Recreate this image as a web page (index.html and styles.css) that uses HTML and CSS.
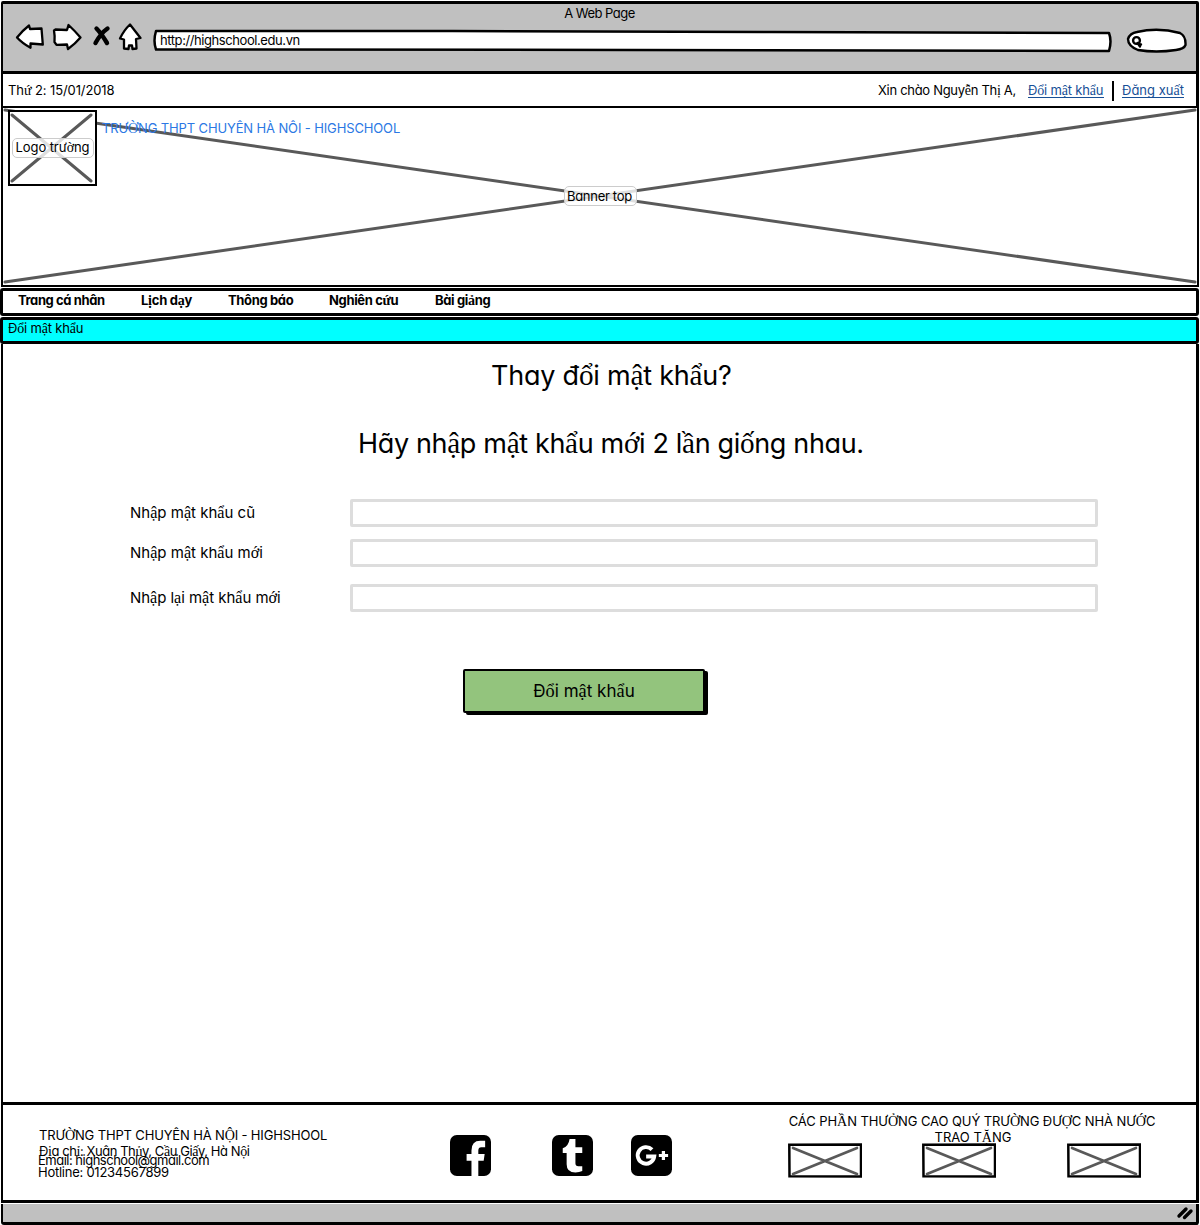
FILE: index.html
```html
<!DOCTYPE html>
<html lang="vi">
<head>
<meta charset="utf-8">
<title>A Web Page</title>
<link rel="stylesheet" href="styles.css">
</head>
<body>
<div class="window">
  <header class="chrome">
    <div class="chrome-title"><span class="t-title">A Web Page</span></div>
    <div class="toolbar">
      <svg class="nav-icons" width="132" height="32" viewBox="12 20 132 32" fill="#fff" stroke="#000" stroke-width="2.3" stroke-linejoin="round" stroke-linecap="round">
        <path d="M17 37.500 Q22 31 29 25.500 L30 29 L41.500 28.500 L42.800 44.500 L30.500 43.500 L30.500 47.800 Q22 43 17 37.500Z"/>
        <path d="M54 30.500 L55.500 29.500 L67 30 L68.500 25 Q75 31 80.500 37.500 Q75 44 68 49 L67 44.500 L56.500 44.800 L54.500 42Q55 36 54 30.500Z"/>
        <path d="M96.500 28.500 Q101 33 107 43 M107.500 28.500 Q101 33 95.500 43" stroke-width="4.400"/>
        <path d="M130 24.500 L140.500 38 L136 39 L136.500 48.500 L132.500 49 L132 45.500 L129 45.500 L128.500 49 L124 48.500 L124 39.500 L120 38.500Q124 30 130 24.500Z"/>
      </svg>
      <div class="address">
        <svg class="shape" width="960" height="24" viewBox="0 0 960 24" fill="#fff" stroke="#000" stroke-width="2.500" stroke-linejoin="round"><path d="M4 2 L300 2 L620 3 L957 4 Q960 12 957 22 L480 21 L4 20.500 Q1 12 4 2Z"/></svg>
        <span class="t-url">http://highschool.edu.vn</span>
      </div>
      <svg class="search" width="62" height="26" viewBox="0 0 62 26" fill="#fff" stroke="#000" stroke-width="2.400" stroke-linecap="round"><path d="M11 4 Q32 -1 54 5 Q60 8 59.500 17 Q58 21 50 22 Q30 25 12 22 Q2 18 2 11 Q4 5 11 4Z"/><circle cx="10.500" cy="12.500" r="3.400"/><path d="M11.500 15 L14 18.500M12 16L15 16.500"/></svg>
    </div>
  </header>

  <div class="userbar">
    <span class="t-date">Th<b>ứ</b> 2: 15/01/2018</span>
    <span class="greeting">Xin chào Nguy<b>ễ</b>n Th<b>ị</b> A,</span>
    <a class="link link-change" href="#">Đ<b>ổ</b>i m<b>ậ</b>t kh<b>ẩ</b>u</a>
    <i class="divider"></i>
    <a class="link link-out" href="#">Đăng xu<b>ấ</b>t</a>
  </div>

  <section class="banner">
    <svg class="shape" width="1196" height="178" viewBox="0 0 1196 178" stroke="#595959" stroke-width="3" stroke-linecap="round"><path d="M2 2 L1192 174 M2 174 L1192 2"/></svg>
    <div class="logo">
      <svg class="shape" width="84" height="72" viewBox="0 0 84 72" stroke="#595959" stroke-width="3" stroke-linecap="round"><path d="M2 3 L81 69 M81 3 L2 69"/></svg>
      <span class="tag tag-logo">Logo trư<b>ờ</b>ng</span>
    </div>
    <h1 class="school">TRƯ<b>Ờ</b>NG THPT CHUYÊN HÀ NÔI - HIGHSCHOOL</h1>
    <span class="tag tag-banner">Banner top</span>
  </section>

  <nav class="menu">
    <span class="m1">Trang cá nhân</span>
    <span class="m2">L<b>ị</b>ch d<b>ạ</b>y</span>
    <span class="m3">Thông báo</span>
    <span class="m4">Nghiên c<b>ứ</b>u</span>
    <span class="m5">Bài gi<b>ả</b>ng</span>
  </nav>

  <div class="crumb"><span class="t-crumb">Đ<b>ổ</b>i m<b>ậ</b>t kh<b>ẩ</b>u</span></div>

  <main class="content">
    <h2 class="head head-one">Thay đ<b>ổ</b>i m<b>ậ</b>t kh<b>ẩ</b>u?</h2>
    <h2 class="head head-two">Hãy nh<b>ậ</b>p m<b>ậ</b>t kh<b>ẩ</b>u m<b>ớ</b>i 2 l<b>ầ</b>n gi<b>ố</b>ng nhau.</h2>
    <form class="form">
      <div class="field"><label>Nh<b>ậ</b>p m<b>ậ</b>t kh<b>ẩ</b>u cũ</label><div class="input"></div></div>
      <div class="field"><label>Nh<b>ậ</b>p m<b>ậ</b>t kh<b>ẩ</b>u m<b>ớ</b>i</label><div class="input"></div></div>
      <div class="field field-last"><label>Nh<b>ậ</b>p l<b>ạ</b>i m<b>ậ</b>t kh<b>ẩ</b>u m<b>ớ</b>i</label><div class="input"></div></div>
      <button class="submit" type="button"><span>Đ<b>ổ</b>i m<b>ậ</b>t kh<b>ẩ</b>u</span></button>
    </form>
  </main>

  <footer class="footer">
    <div class="contact">
      <p class="c1"><span>TRƯ<b>Ờ</b>NG THPT CHUYÊN HÀ N<b>Ộ</b>I - HIGHSHOOL</span></p>
      <p class="c2"><span>Đ<b>ị</b>a ch<b>ỉ</b>: Xuân Th<b>ủ</b>y, C<b>ầ</b>u Gi<b>ấ</b>y, Hà N<b>ộ</b>i</span></p>
      <p class="c3"><span>Email: highschool@gmail.com</span></p>
      <p class="c4"><span>Hotline: 01234567899</span></p>
    </div>
    <div class="social">
      <svg width="41" height="41" viewBox="0 0 42 42"><rect width="42" height="42" rx="7"/><path fill="#fff" d="M22 42V26.500H17V19.500H22V16Q22 6 31 6H36V12.500H32Q29 12.500 29 16V19.500H35.500L34.500 26.500H29V42Z"/></svg>
      <svg width="41" height="41" viewBox="0 0 42 42"><rect width="42" height="42" rx="7"/><path fill="#fff" d="M18 4H24V12.500H31V18.500H24V29Q24 32 27 32H31V37Q28 38.500 24 38.500Q15 38.500 15 30V18.500H11V13.500Q17 11.500 18 4Z"/></svg>
      <svg width="41" height="41" viewBox="0 0 42 42"><rect width="42" height="42" rx="7"/><path fill="none" stroke="#fff" stroke-width="4" d="M21.500 15A8.500 8.500 0 1 0 23.800 22H15.500"/><path fill="none" stroke="#fff" stroke-width="3.300" d="M28.500 21H38M33.200 16.300V25.700"/></svg>
    </div>
    <div class="awards">
      <p class="a1"><span>CÁC PH<b>Ầ</b>N THƯ<b>Ở</b>NG CAO QUÝ TRƯ<b>Ờ</b>NG ĐƯ<b>Ợ</b>C NHÀ NƯ<b>Ớ</b>C</span></p>
      <p class="a2"><span>TRAO T<b>Ặ</b>NG</span></p>
      <div class="thumbs">
        <svg width="74" height="35" viewBox="0 0 74 35" fill="#fff"><path stroke="#000" stroke-width="2.500" d="M1.300 1.800L73 1.500V33.500L1.500 33.300Z"/><path stroke="#595959" stroke-width="2.700" stroke-linecap="round" d="M5 5L69 31M69 5L5 31"/></svg>
        <svg width="74" height="35" viewBox="0 0 74 35" fill="#fff"><path stroke="#000" stroke-width="2.500" d="M1.300 1.800L73 1.500V33.500L1.500 33.300Z"/><path stroke="#595959" stroke-width="2.700" stroke-linecap="round" d="M5 5L69 31M69 5L5 31"/></svg>
        <svg width="74" height="35" viewBox="0 0 74 35" fill="#fff"><path stroke="#000" stroke-width="2.500" d="M1.300 1.800L73 1.500V33.500L1.500 33.300Z"/><path stroke="#595959" stroke-width="2.700" stroke-linecap="round" d="M5 5L69 31M69 5L5 31"/></svg>
      </div>
    </div>
  </footer>
  <div class="statusbar">
    <svg width="18" height="14" viewBox="0 0 18 14" stroke="#000" stroke-width="3.400" stroke-linecap="round"><path d="M3 10L10 3M8.500 11.500L15 5"/></svg>
  </div>
</div>
</body>
</html>
```
FILE: styles.css
```css
* { box-sizing: border-box; }
body {
  margin: 0;
  background: #fff;
  color: #000;
  font: 13px/16px Inter, "Liberation Sans", sans-serif;
  font-feature-settings: "cv11";
}
/* accented letters use the serif face */
b {
  font-family: "Liberation Serif", serif;
  font-weight: inherit;
  font-size: 1.08em;
  line-height: 1px;
}
p, h1, h2 { margin: 0; font-weight: 400; }
svg { display: block; fill-rule: evenodd; }
span, a, label, h1, h2 { white-space: nowrap; }
.shape { position: absolute; left: 0; top: 0; }

.window { width: 1200px; height: 1225px; display: flex; flex-direction: column; padding: 1px 1px 0; }
.chrome { height: 73px; background: #c0c0c0; border: 3px solid #000; border-left-width: 2px; border-radius: 2px 2px 0 0; }
.chrome-title { height: 16px; padding-top: 1px; text-align: center; letter-spacing: -.5px; }
.toolbar { display: flex; }
.nav-icons { margin-left: 9px; }
.address { position: relative; width: 960px; height: 24px; margin: 9px 0 0 8px; padding: 3px 0 0 8px; }
.address span { position: relative; display: block; letter-spacing: -.42px; }
.search { margin: 8px 0 0 14px; }

.userbar { height: 32px; display: flex; align-items: center; border: solid #000; border-width: 0 3px 0 2px; padding: 0 12px 0 5px; }
.t-date { letter-spacing: -.1px; }
.greeting { margin-left: auto; width: 150px; letter-spacing: -.3px; }
.link { color: #174f96; text-decoration: none; border-bottom: 1px solid #174f96; height: 16px; line-height: 16px; margin-top: 1px; }
.link-change { width: 76px; letter-spacing: -.18px; }
.divider { width: 2px; height: 20px; margin: 2px 8px 0; background: #000; }
.link-out { width: 62px; }

.banner { position: relative; height: 181px; border: solid #000; border-width: 2px; display: flex; }
.logo { position: relative; width: 89px; height: 76px; margin: 2px 0 0 5px; border: 2.5px solid #000; background: #fff; display: flex; align-items: center; justify-content: center; }
.school { position: relative; margin: 12px 0 0 5px; color: #2b78e4; font-size: 13px; letter-spacing: -.13px; }
.tag { height: 20px; line-height: 17px; border: 1px solid #ccc; border-radius: 5px; background: rgba(255,255,255,.8); text-align: center; }
.tag-logo { position: relative; width: 82px; flex: none; letter-spacing: -.08px; }
.tag-banner { position: absolute; left: 561px; top: 78px; width: 73px; line-height: 18px; text-align: left; padding-left: 2px; letter-spacing: -.3px; }

.menu { height: 28px; margin: 1px 0 0 -1px; width: 1199px; border: 3px solid #000; border-radius: 3px; display: flex; align-items: center; padding: 0 0 3px 15px; font-weight: 700; letter-spacing: -.35px; }
.m1 { width: 123px; letter-spacing: -.4px; }
.m2 { width: 87px; letter-spacing: -.25px; }
.m3 { width: 101px; }
.m4 { width: 106px; }
.crumb { height: 27px; width: 1199px; margin: 1px 0 0 -1px; border: 3px solid #000; border-radius: 3px; background: #0ff; padding: 0 5px; letter-spacing: -.18px; }

.content { height: 759px; border: solid #000; border-width: 0 3px 0 2px; }
.head { font-size: 27px; line-height: 34px; display: block; }
.head-one { margin: 15px 0 0 488px; letter-spacing: -.22px; }
.head-two { margin: 34px 0 0 355px; letter-spacing: -.34px; }
.form { margin: 38px 0 0 127px; }
.field { display: flex; align-items: center; height: 28px; margin-bottom: 12px; font-size: 15px; }
.field-last { margin-top: 17px; letter-spacing: -.05px; }
.field label { width: 220px; flex: none; padding-top: 1px; }
.input { width: 748px; height: 28px; border: 3px solid #ddd; border-radius: 2px; }
.submit { display: block; width: 242px; height: 44px; margin: 57px 0 0 333px; padding: 1px 0 0; border: 2px solid #000; border-radius: 2px; background: #93c47d; box-shadow: 3px 2px 0 #000; font: 17px/20px Inter, sans-serif; font-feature-settings: "cv11"; color: #000; }

.footer { height: 101px; border: solid #000; border-width: 3px 3px 3px 2px; display: flex; font-size: 13px; }
.contact { width: 447px; padding: 22px 0 0 35px; }
.contact p { height: 16px; }
.c1, .c2 { padding-left: 1px; }
.c1 { letter-spacing: -.15px; }
.c2 { letter-spacing: -.43px; }
.contact .c3 { margin-top: -5px; height: 12px; line-height: 12px; letter-spacing: -.5px; }
.contact .c4 { height: 12px; line-height: 12px; letter-spacing: -.25px; }
.social { width: 338px; display: flex; padding-top: 30px; }
.social svg:nth-child(2) { margin: 0 38px 0 61px; }
.awards { width: 368px; padding-top: 8px; text-align: center; }
.a1 { letter-spacing: -.08px; }
.a2 { padding-left: 2px; }
.thumbs { display: flex; margin-top: -2px; gap: 60px; }
.thumbs svg:last-child { margin-left: 11px; }
.statusbar { height: 21px; margin-top: 1px; border: solid #000; border-width: 0 3px 3px 2px; border-radius: 0 0 3px 3px; background: #c0c0c0; display: flex; justify-content: flex-end; padding: 2px 2px 0; }
```
